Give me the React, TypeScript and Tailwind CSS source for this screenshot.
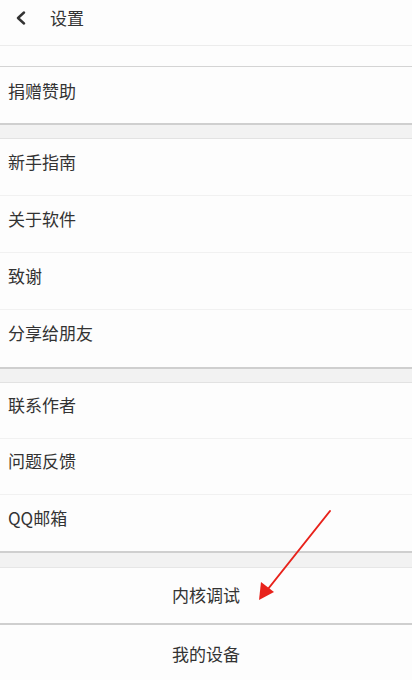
import React from "react";

const font = { fontFamily: '"Noto Sans CJK SC", "Noto Sans", sans-serif' };

function Row({ label, h, last = false }: { label: string; h: string; last?: boolean }) {
  return (
    <div
      className={`${h} flex items-center pl-[8px] pb-[11px] text-[17px] text-[#333333] bg-[#fdfdfd] ${
        last ? "" : "border-b border-[#f1f1f1]"
      }`}
    >
      {label}
    </div>
  );
}

function Group({ items, h }: { items: string[]; h: string }) {
  return (
    <div className="border-t border-[#e2e2e2] border-b-2 border-b-[#cfcfcf] shadow-[0_1px_1px_rgba(0,0,0,0.08)]">
      {items.map((it, i) => (
        <Row key={it} label={it} h={h} last={i === items.length - 1} />
      ))}
    </div>
  );
}

function Gap() {
  return <div className="h-[13px] bg-[#f2f2f2]" />;
}

export default function App() {
  return (
    <div className="relative w-[412px] h-[680px] overflow-hidden bg-[#f2f2f2]" style={font}>
      {/* Header */}
      <div className="h-[46px] flex items-center bg-[#fdfdfd] border-b border-[#ececec] pb-[10px]">
        <svg className="ml-[15px] w-[12px] h-[14px]" viewBox="0 0 12 14" fill="none">
          <path d="M9 1.5L3 7l6 5.5" stroke="#333" strokeWidth="2.4" strokeLinecap="round" strokeLinejoin="round" />
        </svg>
        <span className="ml-[23px] text-[17px] text-[#333333]">设置</span>
      </div>
      <div className="h-[21px] bg-[#fdfdfd] border-b border-[#d4d4d4]" />

      <div className="border-b-2 border-[#cfcfcf]">
        <div className="h-[56px] flex items-center pl-[8px] pb-[8px] text-[17px] text-[#333333] bg-[#fdfdfd]">
          捐赠赞助
        </div>
      </div>
      <Gap />
      <Group items={["新手指南", "关于软件", "致谢", "分享给朋友"]} h="h-[57px]" />
      <Gap />
      <Group items={["联系作者", "问题反馈", "QQ邮箱"]} h="h-[56px]" />
      <div className="h-[14px] bg-[#f2f2f2]" />

      <div className="border-t border-[#e6e6e6] bg-[#fdfdfd]">
        <div className="h-[57px] flex items-center justify-center pb-[2px] text-[17px] text-[#333333] border-b-2 border-[#cfcfcf]">
          内核调试
        </div>
        <div className="h-[56px] flex items-center justify-center pt-[2px] text-[17px] text-[#333333]">
          我的设备
        </div>
      </div>

      {/* Red annotation arrow */}
      <svg className="absolute left-0 top-0 pointer-events-none" width="412" height="680" viewBox="0 0 412 680">
        <line x1="330" y1="511" x2="268" y2="589" stroke="#e8221b" strokeWidth="2" strokeLinecap="round" />
        <path d="M259 600 L261 582 L274 592 Z" fill="#e8221b" />
      </svg>
    </div>
  );
}
